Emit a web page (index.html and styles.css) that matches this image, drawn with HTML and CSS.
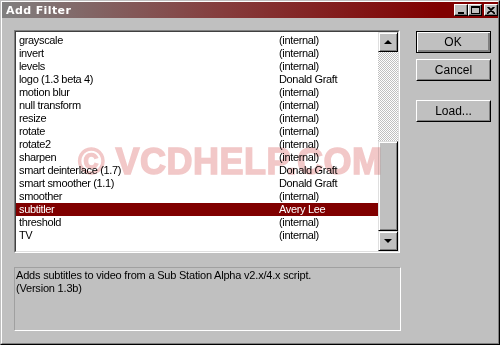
FILE: index.html
```html
<!DOCTYPE html>
<html>
<head>
<meta charset="utf-8">
<title>Add Filter</title>
<link rel="stylesheet" href="styles.css">
</head>
<body>
<div class="window">
  <div class="frame">
    <div class="titlebar">
      <span class="title">Add Filter</span>
      <div class="ctrls">
        <div class="tbtn"><svg width="8" height="7" viewBox="0 0 8 7"><rect x="1" y="5" width="6" height="2" fill="#000"/></svg></div>
        <div class="tbtn"><svg width="9" height="8" viewBox="0 0 9 8"><rect x="0.5" y="0.5" width="8" height="7" fill="none" stroke="#000"/><rect x="0" y="0" width="9" height="2" fill="#000"/></svg></div>
        <div class="tbtn close"><svg width="8" height="7" viewBox="0 0 8 7"><path d="M0.5 0 L7.5 7 M1.5 0 L8.5 7 M7.5 0 L0.5 7 M6.5 0 L-0.5 7" stroke="#000" stroke-width="1.1"/></svg></div>
      </div>
    </div>
    <div class="body">
      <div class="top">
        <div class="listbox">
          <div class="list">
            <div class="row"><span class="name">grayscale</span><span>(internal)</span></div>
            <div class="row"><span class="name">invert</span><span>(internal)</span></div>
            <div class="row"><span class="name">levels</span><span>(internal)</span></div>
            <div class="row"><span class="name">logo (1.3 beta 4)</span><span>Donald Graft</span></div>
            <div class="row"><span class="name">motion blur</span><span>(internal)</span></div>
            <div class="row"><span class="name">null transform</span><span>(internal)</span></div>
            <div class="row"><span class="name">resize</span><span>(internal)</span></div>
            <div class="row"><span class="name">rotate</span><span>(internal)</span></div>
            <div class="row"><span class="name">rotate2</span><span>(internal)</span></div>
            <div class="row"><span class="name">sharpen</span><span>(internal)</span></div>
            <div class="row"><span class="name">smart deinterlace (1.7)</span><span>Donald Graft</span></div>
            <div class="row"><span class="name">smart smoother (1.1)</span><span>Donald Graft</span></div>
            <div class="row"><span class="name">smoother</span><span>(internal)</span></div>
            <div class="row selected"><span class="name">subtitler</span><span>Avery Lee</span></div>
            <div class="row"><span class="name">threshold</span><span>(internal)</span></div>
            <div class="row"><span class="name">TV</span><span>(internal)</span></div>
          </div>
          <div class="scrollbar">
            <div class="sbtn"><span class="arrow up"></span></div>
            <div class="track"></div>
            <div class="thumb"></div>
            <div class="sbtn"><span class="arrow down"></span></div>
          </div>
        </div>
        <div class="buttons">
          <div class="btn default"><div class="btn-face">OK</div></div>
          <div class="btn cancel"><div class="btn-face">Cancel</div></div>
          <div class="btn load"><div class="btn-face">Load...</div></div>
        </div>
      </div>
      <div class="desc">Adds subtitles to video from a Sub Station Alpha v2.x/4.x script.<br>(Version 1.3b)</div>
    </div>
  </div>
  <div class="watermark">© VCDHELP.COM</div>
</div>
</body>
</html>
```

FILE: styles.css
```css
html, body {
  margin: 0;
  padding: 0;
  background: #c0c0c0;
}

.window {
  position: relative;
  width: 500px;
  height: 345px;
  box-sizing: border-box;
  background: #c0c0c0;
  border: 1px solid;
  border-color: #c0c0c0 #000 #000 #c0c0c0;
  font-family: "Liberation Sans", Arial, sans-serif;
  font-size: 11px;
  letter-spacing: -0.35px;
  color: #000;
  overflow: hidden;
}

.frame {
  height: 100%;
  box-sizing: border-box;
  border: 1px solid;
  border-color: #fff #808080 #808080 #fff;
  display: flex;
  flex-direction: column;
}

.titlebar {
  height: 16px;
  display: flex;
  align-items: center;
  justify-content: space-between;
  background: linear-gradient(to right, #808080 0%, #853c3c 45%, #800000 88%);
  padding-left: 4px;
}

.title {
  font-family: "DejaVu Sans", Verdana, sans-serif;
  font-weight: bold;
  font-size: 11px;
  color: #fff;
  letter-spacing: 0.4px;
}

.ctrls {
  display: flex;
  align-items: center;
  height: 16px;
}

.tbtn {
  width: 14px;
  height: 12px;
  box-sizing: border-box;
  background: #c0c0c0;
  border: 1px solid;
  border-color: #fff #000 #000 #fff;
  box-shadow: inset -1px -1px #808080;
  display: flex;
  align-items: center;
  justify-content: center;
}

.tbtn.close {
  margin-left: 2px;
}

.body {
  padding: 12px 0 0 12px;
  display: flex;
  flex-direction: column;
}

.top {
  display: flex;
}

.listbox {
  width: 386px;
  height: 223px;
  box-sizing: border-box;
  border: 1px solid;
  border-color: #808080 #fff #fff #808080;
  display: flex;
  position: relative;
}

.listbox::before {
  content: "";
  position: absolute;
  inset: 0;
  border: 1px solid;
  border-color: #404040 #dfdfdf #dfdfdf #404040;
  pointer-events: none;
  z-index: 2;
}

.list {
  flex: 1;
  background: #fff;
  padding-top: 2px;
  margin: 1px 0 1px 1px;
}

.row {
  display: flex;
  height: 13px;
  line-height: 13px;
  padding-left: 3px;
  white-space: nowrap;
}

.row .name {
  width: 260px;
}

.row.selected {
  background: #800000;
  color: #fff;
}

.scrollbar {
  width: 20px;
  margin: 1px 1px 1px 0;
  display: flex;
  flex-direction: column;
}

.sbtn {
  width: 20px;
  height: 20px;
  box-sizing: border-box;
  background: #c0c0c0;
  border: 1px solid;
  border-color: #dfdfdf #000 #000 #dfdfdf;
  box-shadow: inset 1px 1px #fff, inset -1px -1px #808080;
  display: flex;
  align-items: center;
  justify-content: center;
}

.arrow {
  width: 0;
  height: 0;
  border-left: 4px solid transparent;
  border-right: 4px solid transparent;
}

.arrow.up {
  border-bottom: 4px solid #000;
}

.arrow.down {
  border-top: 4px solid #000;
}

.track {
  height: 89px;
  background-color: #c0c0c0;
  background-image: conic-gradient(#fff 25%, #c0c0c0 0 50%, #fff 0 75%, #c0c0c0 0);
  background-size: 2px 2px;
}

.thumb {
  flex: 1;
  box-sizing: border-box;
  background: #c0c0c0;
  border: 1px solid;
  border-color: #dfdfdf #000 #000 #dfdfdf;
  box-shadow: inset 1px 1px #fff, inset -1px -1px #808080;
}

.buttons {
  margin-left: 16px;
  padding-top: 1px;
  display: flex;
  flex-direction: column;
}

.btn {
  width: 75px;
  height: 22px;
  box-sizing: border-box;
  border: 1px solid;
  border-color: #fff #000 #000 #fff;
  background: #c0c0c0;
}

.btn-face {
  height: 100%;
  box-sizing: border-box;
  border: 1px solid;
  border-color: #c0c0c0 #808080 #808080 #c0c0c0;
  display: flex;
  align-items: center;
  justify-content: center;
  font-size: 12px;
  letter-spacing: 0;
}

.btn.default {
  border: 1px solid #000;
  box-shadow: inset 1px 1px #fff, inset -1px -1px #808080;
}

.btn.default .btn-face {
  border-color: #c0c0c0 #808080 #808080 #c0c0c0;
  margin: 1px;
  height: calc(100% - 2px);
  border-width: 0 1px 1px 0;
}

.btn.cancel {
  margin-top: 6px;
}

.btn.load {
  margin-top: 19px;
}

.desc {
  margin-top: 14px;
  width: 387px;
  height: 64px;
  box-sizing: border-box;
  border: 1px solid;
  border-color: #a0a0a0 #fff #fff #a0a0a0;
  padding: 1px 0 0 1px;
  line-height: 13px;
  letter-spacing: -0.2px;
}

.watermark {
  position: absolute;
  left: 77px;
  top: 143px;
  font-family: "Liberation Sans", Arial, sans-serif;
  font-weight: bold;
  font-size: 36px;
  line-height: 36px;
  letter-spacing: 0.5px;
  color: #f2c8c8;
  -webkit-text-stroke: 1.4px #f2c8c8;
  mix-blend-mode: multiply;
  pointer-events: none;
  white-space: nowrap;
}
```
